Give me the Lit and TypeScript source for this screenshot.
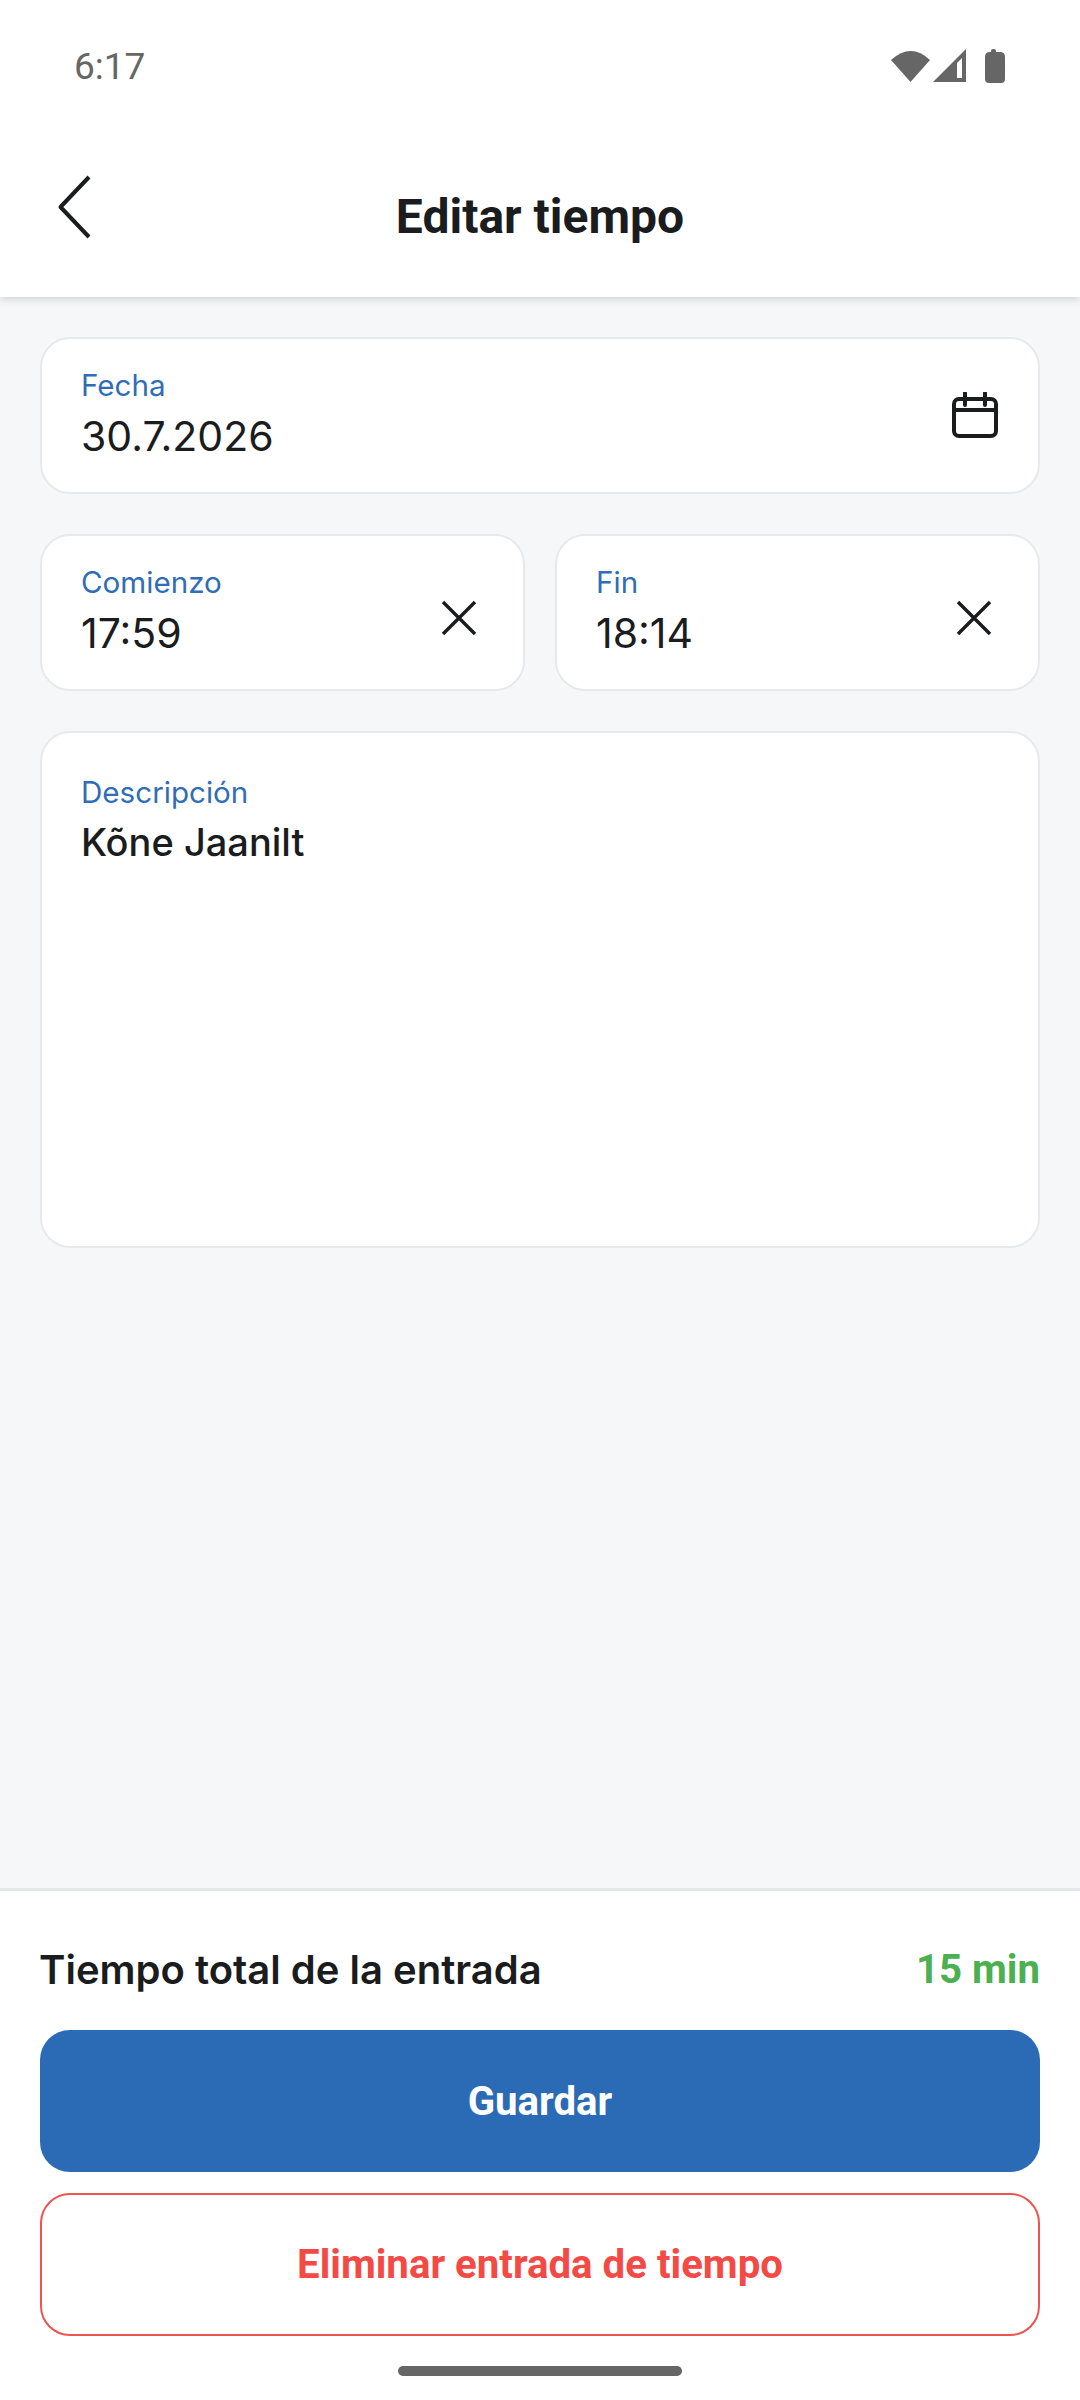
import { LitElement, html, css, svg } from 'lit'
import { customElement } from 'lit/decorators.js'

const closeIcon = svg`<path d="M2 2 L34 34 M34 2 L2 34" fill="none" stroke="#1a1c1e" stroke-width="3.4"/>`

@customElement('app-root')
export class AppRoot extends LitElement {
  static styles = css`
    :host {
      display: block;
      font-family: Inter, "Noto Sans", sans-serif;
      color: #1a1c1e;
    }
    .page {
      height: 2400px;
      display: flex;
      flex-direction: column;
      background: #f6f7f9;
    }
    .top {
      background: #fff;
      height: 297px;
      flex: none;
      box-shadow: 0 2px 8px rgba(0, 0, 0, 0.16);
      position: relative;
      z-index: 1;
    }
    .status {
      height: 132px;
      box-sizing: border-box;
      padding: 0 75px 0 74px;
      display: flex;
      justify-content: space-between;
      align-items: center;
    }
    .time {
      font: 400 37px Roboto, sans-serif;
      color: #666;
    }
    .status-icons {
      display: block;
    }
    .nav {
      height: 165px;
      display: flex;
      align-items: center;
      justify-content: center;
      position: relative;
    }
    .back {
      position: absolute;
      left: 56px;
      top: 43px;
    }
    .title {
      font: 700 48px Roboto, sans-serif;
      padding-top: 3px;
    }
    .content {
      flex: 1;
      padding: 40px 40px 0;
      display: flex;
      flex-direction: column;
      gap: 40px;
    }
    .times {
      display: grid;
      grid-template-columns: 485px 485px;
      justify-content: space-between;
    }
    .card {
      background: #fff;
      border: 2.5px solid #e8e9ec;
      border-radius: 30px;
      box-sizing: border-box;
      height: 157px;
      padding: 0 40px 0 39px;
      display: flex;
      align-items: center;
      justify-content: space-between;
    }
    .card.desc {
      height: 517px;
      align-items: flex-start;
      padding-top: 42px;
    }
    .text {
      margin-bottom: 4px;
    }
    .desc .text {
      margin-bottom: 0;
    }
    .label {
      font-size: 29.6px;
      line-height: 34px;
      color: #2f6db5;
    }
    .value {
      font-size: 41px;
      line-height: 46px;
      margin-top: 11px;
    }
    .desc .value {
      font-weight: 500;
      font-size: 38px;
      margin-top: 10px;
    }
    .field-icon {
      display: block;
      flex: none;
    }
    .close {
      margin: 11px 6px 0 0;
    }
    .calendar {
      margin-top: -2px;
    }
    .footer {
      flex: none;
      height: 512px;
      box-sizing: border-box;
      background: #fff;
      border-top: 3px solid #e6e7ea;
      padding: 0 40px;
      display: flex;
      flex-direction: column;
      position: relative;
    }
    .total {
      display: flex;
      justify-content: space-between;
      align-items: center;
      height: 139px;
      padding-top: 18px;
      box-sizing: border-box;
      font-size: 40px;
      font-weight: 600;
    }
    .total span {
      margin-left: -1px;
    }
    .total b {
      font: 700 40.2px Roboto, sans-serif;
      color: #4caf50;
    }
    .btn {
      height: 142px;
      border-radius: 30px;
      box-sizing: border-box;
      display: flex;
      align-items: center;
      justify-content: center;
      font: 700 40.2px Roboto, sans-serif;
    }
    .save {
      background: #2b6bb6;
      color: #fff;
    }
    .remove {
      margin-top: 21px;
      height: 143px;
      border: 2.5px solid #ef5350;
      color: #f44a45;
    }
    .home {
      position: absolute;
      left: 398px;
      top: 475px;
      width: 284px;
      height: 10px;
      border-radius: 5px;
      background: #666;
    }
  `

  field(label: string, value: string, icon: unknown) {
    return html`
      <div class="card">
        <div class="text">
          <div class="label">${label}</div>
          <div class="value">${value}</div>
        </div>
        ${icon}
      </div>
    `
  }

  render() {
    const close = html`<svg class="field-icon close" width="36" height="36" viewBox="0 0 36 36">${closeIcon}</svg>`
    const calendar = html`<svg class="field-icon calendar" width="46" height="46" viewBox="0 0 46 46" fill="none" stroke="#1a1c1e" stroke-width="4">
      <rect x="2" y="7" width="42" height="37" rx="5"/>
      <path d="M2 18 H44"/>
      <path d="M13 1 V13 M33 1 V13" stroke-linecap="round"/>
    </svg>`
    return html`
      <div class="page">
        <div class="top">
          <div class="status">
            <span class="time">6:17</span>
            <svg class="status-icons" width="114" height="34" viewBox="0 0 114 34" fill="#666">
              <path d="M0 11 Q20 -7 39 11 L19.5 33 Z"/>
              <path fill-rule="evenodd" d="M42 33 L75 0 V33 Z M66 29 H71 V9 L66 14 Z"/>
              <path d="M100 2 Q100 0 102 0 H103 Q105 0 105 2 V3 H109 Q114 3 114 8 V30 Q114 34 110 34 H98 Q94 34 94 30 V8 Q94 3 99 3 H100 Z"/>
            </svg>
          </div>
          <div class="nav">
            <svg class="back" width="36" height="64" viewBox="0 0 36 64" fill="none" stroke="#1a1c1e" stroke-width="4" stroke-linejoin="round">
              <path d="M33 2 L4.5 32 L33 62"/>
            </svg>
            <div class="title">Editar tiempo</div>
          </div>
        </div>
        <div class="content">
          ${this.field('Fecha', '30.7.2026', calendar)}
          <div class="times">
            ${this.field('Comienzo', '17:59', close)}
            ${this.field('Fin', '18:14', close)}
          </div>
          <div class="card desc">
            <div class="text">
              <div class="label">Descripción</div>
              <div class="value">Kõne Jaanilt</div>
            </div>
          </div>
        </div>
        <div class="footer">
          <div class="total">
            <span>Tiempo total de la entrada</span>
            <b>15 min</b>
          </div>
          <div class="btn save">Guardar</div>
          <div class="btn remove">Eliminar entrada de tiempo</div>
          <div class="home"></div>
        </div>
      </div>
    `
  }
}
